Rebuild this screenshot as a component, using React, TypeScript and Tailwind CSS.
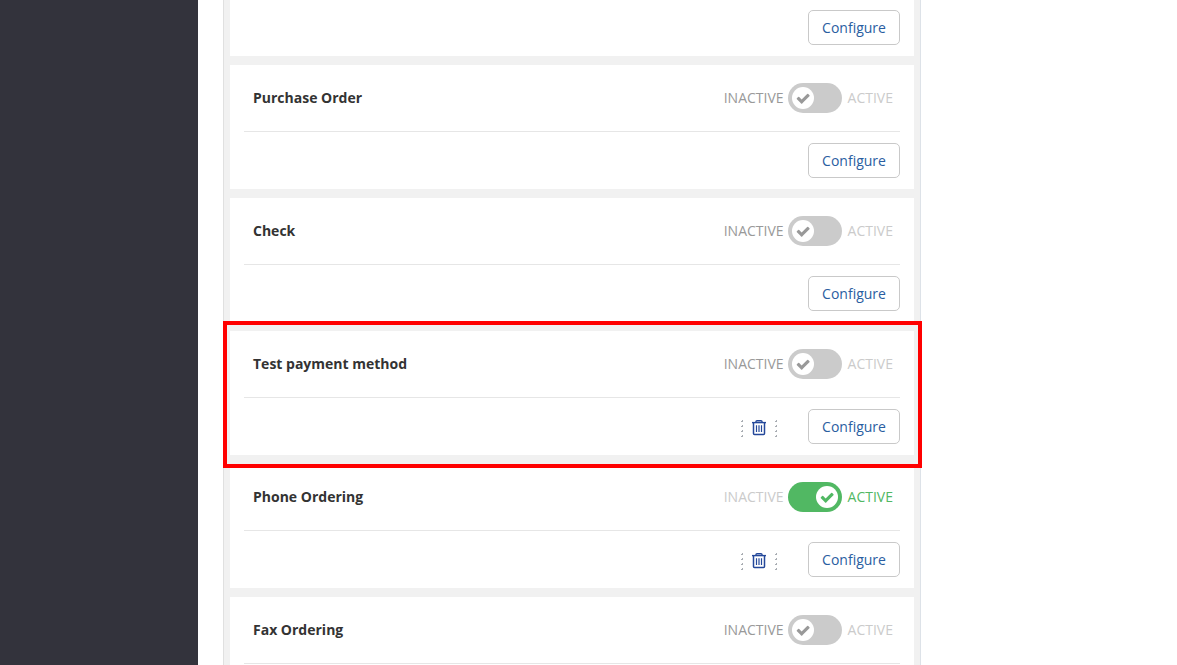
import { useState } from "react";

type Method = {
  name: string;
  active: boolean;
  removable?: boolean;
  highlighted?: boolean;
  actions?: boolean;
};

const methods: Method[] = [
  { name: "Purchase Order", active: false },
  { name: "Check", active: false },
  { name: "Test payment method", active: false, removable: true, highlighted: true },
  { name: "Phone Ordering", active: true, removable: true },
  { name: "Fax Ordering", active: false, actions: false },
];

function CheckIcon() {
  return (
    <svg viewBox="-80 0 1792 1792" className="size-[15px]" fill="currentColor" aria-hidden="true">
      <path d="M1671 566q0 40-28 68l-724 724-136 136q-28 28-68 28t-68-28l-136-136-362-362q-28-28-28-68t28-68l136-136q28-28 68-28t68 28l294 295 656-657q28-28 68-28t68 28l136 136q28 28 28 68z" />
    </svg>
  );
}

function TrashIcon() {
  return (
    <svg viewBox="0 0 14 17" width="14" height="17" fill="none" stroke="currentColor" aria-hidden="true">
      <path d="M0 2.6H14" strokeWidth="1.4" />
      <path d="M4 2.6V1.5Q4 0.7 5 0.7H9Q10 0.7 10 1.5V2.6" strokeWidth="1.4" />
      <path d="M1.5 3V13.4Q1.5 14.4 2.5 14.4H11.5Q12.5 14.4 12.5 13.4V3" strokeWidth="1.5" />
      <path d="M4.5 5.2V12M7 5.2V12M9.5 5.2V12" strokeWidth="1.2" />
    </svg>
  );
}

function Dots() {
  return (
    <svg viewBox="0 0 2 17" width="2" height="17" fill="#a9adb3" aria-hidden="true">
      <path d="M1 0h1v2H0V1h1zM1 5h1v2H0V6h1zM1 10h1v2H0v-1h1zM1 15h1v2H0v-1h1z" />
    </svg>
  );
}

function ConfigureButton() {
  return (
    <button
      type="button"
      className="h-[35px] w-[92px] rounded-[5px] border border-[#c9c9c9] bg-white text-center text-sm text-[#2a5ea1]"
    >
      Configure
    </button>
  );
}

function Toggle({ name, initial }: { name: string; initial: boolean }) {
  const [on, setOn] = useState(initial);
  return (
    <div className="flex items-center text-sm">
      <span className={on ? "text-[#cbcbcb]" : "text-[#999999]"}>INACTIVE</span>
      <button
        type="button"
        role="switch"
        aria-checked={on}
        aria-label={name}
        onClick={() => setOn(!on)}
        className={`mr-1.5 ml-1 flex h-[30px] w-[54px] items-center rounded-full px-1 ${
          on ? "justify-end bg-[#51b863] text-[#51b863]" : "bg-[#cbcbcb] text-[#999999]"
        }`}
      >
        <span className="flex size-[22px] items-center justify-center rounded-full bg-white">
          <CheckIcon />
        </span>
      </button>
      <span className={on ? "text-[#51b863]" : "text-[#cbcbcb]"}>ACTIVE</span>
    </div>
  );
}

function MethodCard({ method }: { method: Method }) {
  return (
    <section className="relative h-[124px] shrink-0 bg-white px-3.5">
      <header className="flex h-[67px] items-center justify-between border-b border-[#e6e6e6] pr-[7px] pl-[9px]">
        <h2 className="text-sm font-bold text-[#333333]">{method.name}</h2>
        <Toggle name={method.name} initial={method.active} />
      </header>
      {method.actions !== false && (
        <div className="flex items-center justify-end gap-[31px] py-[11px]">
          {method.removable && (
            <div className="flex items-center gap-[9px] pt-[3px]">
              <Dots />
              <button type="button" aria-label={`Delete ${method.name}`} className="text-[#24489a]">
                <TrashIcon />
              </button>
              <Dots />
            </div>
          )}
          <ConfigureButton />
        </div>
      )}
      {method.highlighted && (
        <div className="pointer-events-none absolute -top-2.5 -right-2 -bottom-[13px] -left-[7px] z-10 border-4 border-[#ff0000]" />
      )}
    </section>
  );
}

export default function App() {
  return (
    <div className="flex h-screen overflow-hidden bg-white font-['Open_Sans',sans-serif]">
      <aside className="w-[198px] shrink-0 bg-[#33333c]" />
      <main className="min-w-0 flex-1 pl-[25px]">
        <div className="flex w-full max-w-[698px] flex-col gap-[9px] border-x border-l-[#e0e0e0] border-r-[#dde2e8] bg-[#f1f1f1] px-1.5">
          <section className="flex shrink-0 justify-end bg-white px-3.5 pt-2.5 pb-[11px]">
            <ConfigureButton />
          </section>
          {methods.map((method) => (
            <MethodCard key={method.name} method={method} />
          ))}
        </div>
      </main>
    </div>
  );
}
